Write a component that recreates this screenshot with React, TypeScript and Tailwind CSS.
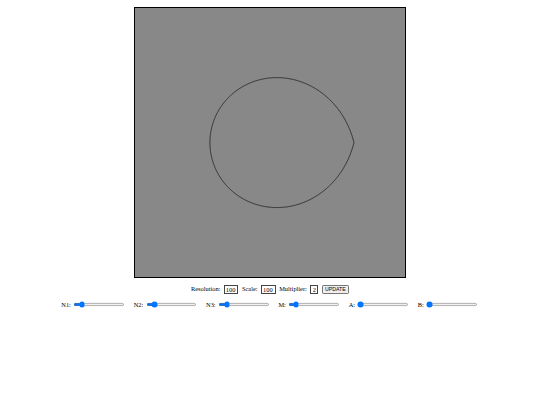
import React, { useMemo } from 'react';

// Superformula: m=1, n1=n2=n3=1, a=b=1
function superformula(phi: number, m: number, n1: number, n2: number, n3: number, a: number, b: number) {
  const t1 = Math.pow(Math.abs(Math.cos((m * phi) / 4) / a), n2);
  const t2 = Math.pow(Math.abs(Math.sin((m * phi) / 4) / b), n3);
  return Math.pow(t1 + t2, -1 / n1);
}

const SIZE = 673;
const SCALE = 211;

function Shape() {
  const d = useMemo(() => {
    const pts: string[] = [];
    const steps = 720;
    for (let i = 0; i <= steps; i++) {
      const phi = (i / steps) * Math.PI * 2;
      const r = superformula(phi, 1, 1, 1, 1, 1, 1) * SCALE;
      const x = SIZE / 2 + r * Math.cos(phi);
      const y = SIZE / 2 + r * Math.sin(phi);
      pts.push(`${i === 0 ? 'M' : 'L'}${x.toFixed(2)},${y.toFixed(2)}`);
    }
    return pts.join(' ') + ' Z';
  }, []);

  return (
    <svg width={SIZE} height={SIZE} viewBox={`0 0 ${SIZE} ${SIZE}`} className="block">
      <path d={d} fill="none" stroke="#1a1a1a" strokeWidth={2} />
    </svg>
  );
}

const sliders = [
  { label: 'N1:', min: 0, max: 8, value: 1 },
  { label: 'N2:', min: 0, max: 8, value: 1 },
  { label: 'N3:', min: 0, max: 8, value: 1 },
  { label: 'M:', min: 0, max: 10, value: 1 },
  { label: 'A:', min: 1, max: 10, value: 1 },
  { label: 'B:', min: 1, max: 10, value: 1 },
];

export default function App() {
  return (
    <div className="[zoom:0.4] w-[1350px] h-[1012px] bg-white text-black font-['Liberation_Serif',serif] text-[16px]">
      {/* canvas */}
      <div className="pt-[17px] flex justify-center">
        <div className="border-2 border-black bg-[#888888]">
          <Shape />
        </div>
      </div>

      {/* params row */}
      <div className="mt-[16px] flex justify-center items-center gap-[9px]">
        <span>Resolution:</span>
        <input
          type="text"
          defaultValue="100"
          className="w-[36px] h-[23px] border-2 border-[#444] bg-white px-[2px] text-[16px] leading-none"
        />
        <span>Scale:</span>
        <input
          type="text"
          defaultValue="100"
          className="w-[36px] h-[23px] border-2 border-[#444] bg-white px-[2px] text-[16px] leading-none"
        />
        <span>Multiplier:</span>
        <input
          type="text"
          defaultValue="2"
          className="w-[19px] h-[23px] border-2 border-[#444] bg-white px-[3px] text-[16px] leading-none"
        />
        <button className="h-[22px] px-[6px] border-2 border-[#767676] rounded-[3px] bg-[#efefef] font-['Liberation_Sans',sans-serif] text-[13px] leading-none">
          UPDATE
        </button>
      </div>

      {/* sliders row */}
      <div className="mt-[14px] flex justify-center items-center gap-[20px]">
        {sliders.map((s) => (
          <div key={s.label} className="flex items-center gap-[4px]">
            <span>{s.label}</span>
            <input
              type="range"
              min={s.min}
              max={s.max}
              step={0.1}
              defaultValue={s.value}
              className="w-[129px] m-[2px]"
            />
          </div>
        ))}
      </div>
    </div>
  );
}
